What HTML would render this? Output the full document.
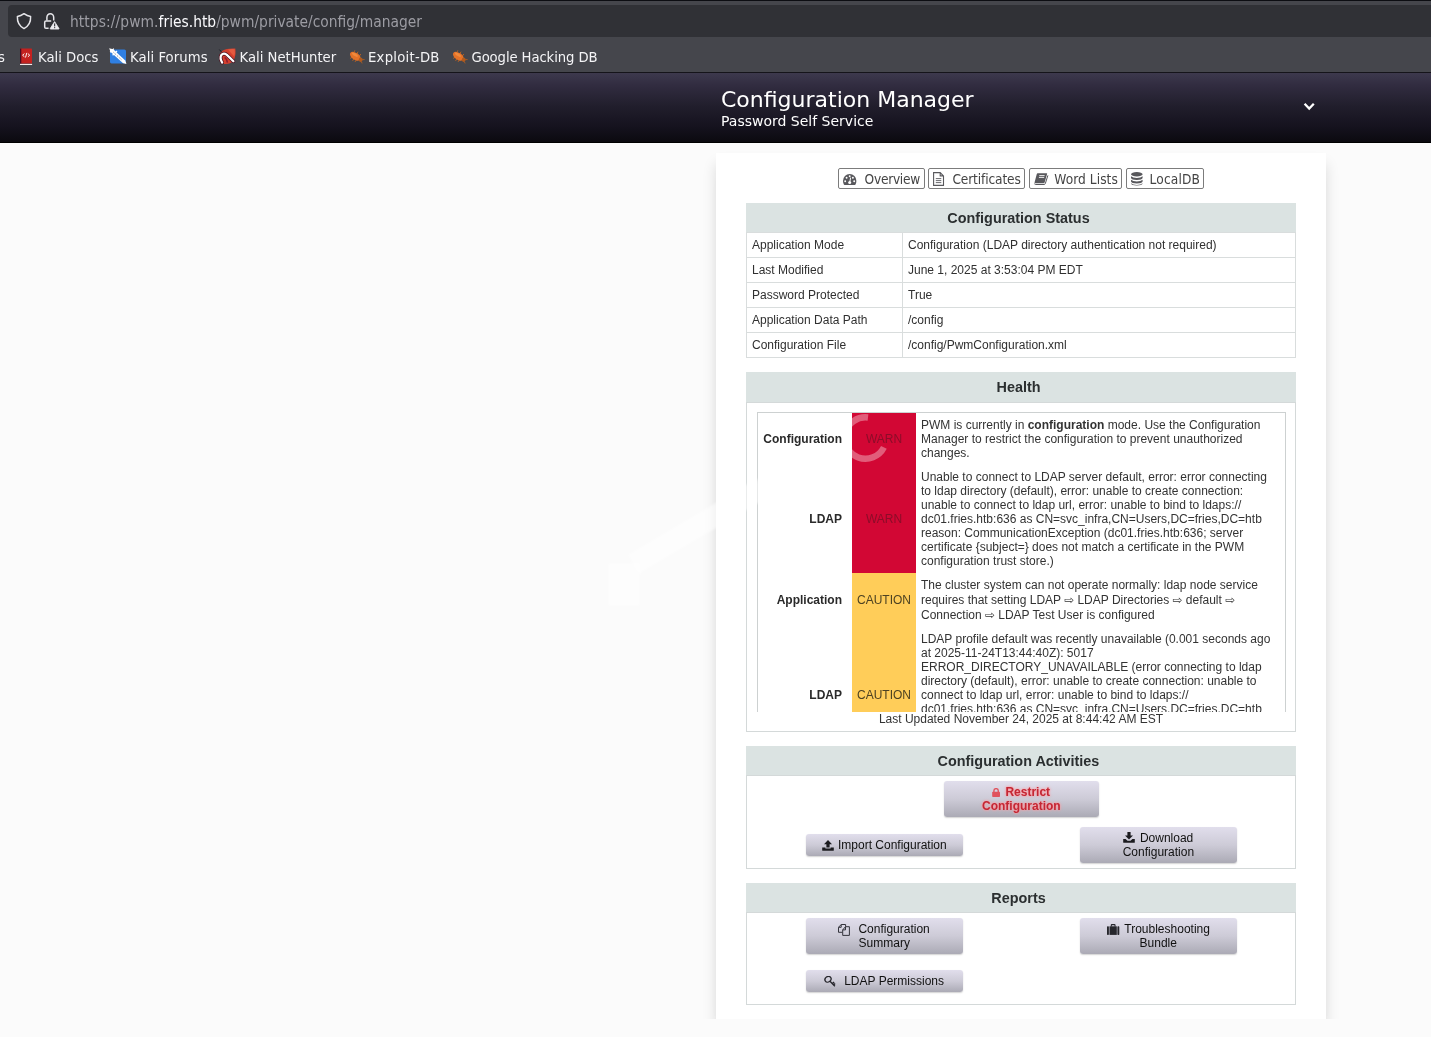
<!DOCTYPE html>
<html lang="en">
<head>
<meta charset="utf-8">
<title>Configuration Manager</title>
<style>
*{box-sizing:border-box;margin:0;padding:0}
html,body{width:1431px;height:1037px;overflow:hidden;background:#fbfbfb;font-family:"Liberation Sans",sans-serif;font-size:12px;color:#222}
.abs{position:absolute}
#root{position:absolute;left:0;top:0;width:1431px;height:1037px;overflow:hidden;will-change:transform}
/* ---------- browser chrome ---------- */
#chrome{position:absolute;left:0;top:0;width:1431px;height:73px;background:#45464c;border-top:1px solid #0c0d12;border-bottom:1px solid #15141a}
#urlbar{position:absolute;left:8px;top:4px;width:1440px;height:32px;border-radius:4px;background:#303136}
#urltext{position:absolute;left:70px;top:11px;font-family:"DejaVu Sans Condensed","DejaVu Sans","Liberation Sans",sans-serif;font-size:15.4px;line-height:20px;color:#9c9ca3;white-space:nowrap}
#urltext b{font-weight:400;color:#fbfbfe}
.bm{position:absolute;top:46px;font-family:"DejaVu Sans Condensed","DejaVu Sans","Liberation Sans",sans-serif;font-size:14.7px;line-height:20px;color:#f4f4f6;white-space:nowrap}
/* ---------- page header ---------- */
#header{position:absolute;left:0;top:73px;width:1431px;height:70px;background:linear-gradient(#3d394d,#312c40 18%,#211e2c 48%,#15121e 78%,#0b0a0f);border-bottom:1px solid #000}
#title{position:absolute;left:721px;top:86px;font-family:"DejaVu Sans","Liberation Sans",sans-serif;font-size:22px;line-height:28px;color:#fff;white-space:nowrap}
#subtitle{position:absolute;left:721px;top:112px;font-family:"DejaVu Sans","Liberation Sans",sans-serif;font-size:14px;line-height:18px;color:#fff;white-space:nowrap}
/* ---------- card ---------- */
#card{position:absolute;left:716px;top:153px;width:610px;height:866px;background:#fff;box-shadow:0 11px 13px 0 rgba(0,0,0,.135),0 14px 30px 0 rgba(0,0,0,.02)}
#below{position:absolute;left:0;top:1019px;width:1431px;height:18px;background:#fbfbfb}
.nav{position:absolute;top:168px;height:21px;border:1px solid #7c7c7c;border-radius:2px;background:#fff;font-family:"DejaVu Sans Condensed","DejaVu Sans","Liberation Sans",sans-serif;font-size:13.6px;line-height:19px;color:#444;white-space:nowrap}
.nav span{position:absolute;top:1px}
.panel{position:absolute;left:746px;width:550px;border:1px solid #d4d9d9;background:#fff}
.ptitle{position:absolute;left:746px;width:550px;height:30px;padding-right:5px;background:#dbe3e2;text-align:center;font-weight:700;font-size:14.4px;line-height:30px;color:#2b2f30}
table.st{position:absolute;left:746px;top:232px;width:550px;border-collapse:collapse;table-layout:fixed}
table.st td{border:1px solid #d9dddd;height:25px;padding:0 0 0 5px;font-size:12px;color:#303030;vertical-align:middle}
.btn{position:absolute;border-radius:3px;background:linear-gradient(#e1deec,#cdcbd7 50%,#abaab5);box-shadow:0 1px 1.5px rgba(0,0,0,.18);text-align:center;font-size:12px;line-height:14px;color:#111}

#hwrap{position:absolute;left:757px;top:412px;width:529px;height:300px;overflow:hidden}
table.ht{width:529px;border-collapse:collapse;table-layout:fixed;border:1px solid #cdd1d1}
table.ht td{padding:5px;font-size:12px;line-height:14px;color:#333;vertical-align:middle}
table.ht td.k{font-weight:700;text-align:right;padding-right:9.5px;color:#2a2a2a}
table.ht td.s{text-align:center;padding:0 0 0 1px}
table.ht td.warn{background:#d20734;color:#8c0d29}
table.ht td.caut{background:#ffcd59;color:#4d4222}
table.ht td.d{white-space:nowrap;padding-left:5.5px}
table.ht td.ar{line-height:14.8px}
table.ht td.ar i{font-style:normal;font-family:"DejaVu Sans",sans-serif;font-size:11.8px;line-height:1}
#lastupd{left:746px;top:712px;width:550px;text-align:center;font-size:12px;line-height:14px;color:#333}
.btn{white-space:nowrap}
.btn span{position:absolute;line-height:14px}
.btn.red{color:#c32734;font-weight:700;text-shadow:0 0 3px #ff9aa0,0 0 2px #ff9aa0}
</style>
</head>
<body>
<div id="root">
<!-- browser chrome -->
<div id="chrome">
  <div id="urlbar"></div>
  <div id="urltext"><span style="letter-spacing:.08px">https://pwm.</span><b>fries.htb</b>/pwm/private/config/manager</div>

  <svg class="abs" style="left:14px;top:8px" width="50" height="24" viewBox="14 9 50 24">
    <path d="M24 13.7 C26.2 15.3 28.3 16.2 30.6 16.6 C30.9 21.8 28.8 26 24 28.6 C19.2 26 17.1 21.8 17.4 16.6 C19.7 16.2 21.8 15.3 24 13.7 Z" fill="none" stroke="#e6e6ea" stroke-width="1.5" stroke-linejoin="round"/>
    <path d="M46.9 20.6 V17.4 A3.4 3.7 0 0 1 53.7 17.4 V20.6" fill="none" stroke="#e6e6ea" stroke-width="1.5"/>
    <path d="M51.2 20.9 H46 Q44.7 20.9 44.7 22.2 V27 Q44.7 28.3 46 28.3 H48.6" fill="none" stroke="#e6e6ea" stroke-width="1.5"/>
    <path d="M54.6 21.6 L59 28.6 Q59.2 29.1 58.6 29.1 H50.6 Q50 29.1 50.2 28.6 Z" fill="#ececf0" stroke="#ececf0" stroke-width="0.8" stroke-linejoin="round"/>
    <rect x="54.1" y="23.4" width="1.1" height="3" fill="#303136"/><rect x="54.1" y="27.1" width="1.1" height="1.1" fill="#303136"/>
  </svg>
  <!-- favicons -->
  <svg class="abs" style="left:19px;top:46px" width="15" height="19" viewBox="19 47 15 19">
    <rect x="20" y="48.6" width="12" height="15" rx="0.6" fill="#c4211f"/><rect x="20" y="48.6" width="1.3" height="15" fill="#4a0d22"/>
    <rect x="20" y="63.9" width="12.1" height="1.1" fill="#f3e9e9"/>
    <path d="M24.4 53.6 L22.6 55.2 L24.4 56.8 M27.9 53.6 L29.7 55.2 L27.9 56.8 M26.8 52.9 L25.5 57.5" fill="none" stroke="#fff" stroke-width="0.95"/>
  </svg>
  <svg class="abs" style="left:108px;top:46px" width="20" height="19" viewBox="108 47 20 19">
    <rect x="110" y="49.6" width="16" height="13.8" rx="1.6" fill="#2f7fe2"/>
    <path d="M109.2 48.2 L113.2 49.2 L125.2 60.4 L126.6 64 L122.8 63 L110.4 51.8 Z" fill="#fff"/>
    <path d="M110.2 52.2 L113.8 48.6 M112.6 55.2 L117 51" stroke="#fff" stroke-width="1.3"/>
    <path d="M113.5 52.3 L122 60.2" stroke="#27323f" stroke-width="0.6" stroke-dasharray="1.2 1.2"/>
  </svg>
  <svg class="abs" style="left:217px;top:46px" width="21" height="19" viewBox="217 47 21 19">
    <path d="M222.5 50.8 Q227 48 235.3 48.6 Q236.4 54.5 233.8 60.2 Q230 64.8 224 63.9 Q219 62.2 219.2 56.5 Q219.6 52.6 222.5 50.8 Z" fill="#d4402e"/>
    <path d="M228 49.4 Q232 48.8 234.6 49.2 Q235.4 53 234.2 56.6 Z" fill="#e45a40"/>
    <path d="M219.4 49.6 L221.4 51.8" stroke="#1a1a22" stroke-width="1"/>
    <path d="M222.2 62.6 Q219.6 58 221.2 55.2 Q223.4 52.4 226.6 54.6 Q229.8 57.6 233.4 61.2" fill="none" stroke="#4a1220" stroke-width="3.7" stroke-linecap="round"/>
    <path d="M222.2 62.6 Q219.6 58 221.2 55.2 Q223.4 52.4 226.6 54.6 Q229.8 57.6 233.4 61.2" fill="none" stroke="#fff" stroke-width="2.2" stroke-linecap="round"/>
    <path d="M224.6 57.4 Q226.8 58.6 227.4 62.6" fill="none" stroke="#8e1c30" stroke-width="1.5"/>
  </svg>
  <svg class="abs" style="left:346px;top:47px" width="20" height="17" viewBox="346 48 20 17">
    <g transform="rotate(33 356 56.7)">
      <path d="M351.6 52 L352.6 61.4 M355 51.4 L355.4 62 M358.6 51.8 L358 61.6" stroke="#b8601f" stroke-width="0.9"/>
      <ellipse cx="355.2" cy="56.7" rx="6" ry="3.5" fill="#e57228"/>
      <ellipse cx="361.6" cy="56.7" rx="2" ry="2.1" fill="#b25a1c"/>
      <path d="M363 55.6 L364.8 54.4 M363 57.8 L364.8 59" stroke="#b8601f" stroke-width="0.7"/>
      <ellipse cx="354" cy="55.6" rx="3.4" ry="1.4" fill="#f18a3c"/>
    </g>
  </svg>
  <svg class="abs" style="left:449px;top:47px" width="20" height="17" viewBox="346 48 20 17">
    <g transform="rotate(33 356 56.7)">
      <path d="M351.6 52 L352.6 61.4 M355 51.4 L355.4 62 M358.6 51.8 L358 61.6" stroke="#b8601f" stroke-width="0.9"/>
      <ellipse cx="355.2" cy="56.7" rx="6" ry="3.5" fill="#e57228"/>
      <ellipse cx="361.6" cy="56.7" rx="2" ry="2.1" fill="#b25a1c"/>
      <path d="M363 55.6 L364.8 54.4 M363 57.8 L364.8 59" stroke="#b8601f" stroke-width="0.7"/>
      <ellipse cx="354" cy="55.6" rx="3.4" ry="1.4" fill="#f18a3c"/>
    </g>
  </svg>
  <div class="bm" style="left:-2px">s</div>
  <div class="bm" style="left:38px">Kali Docs</div>
  <div class="bm" style="left:130px;letter-spacing:.08px">Kali Forums</div>
  <div class="bm" style="left:239.5px">Kali NetHunter</div>
  <div class="bm" style="left:368px;letter-spacing:.25px">Exploit-DB</div>
  <div class="bm" style="left:471.5px;letter-spacing:-.1px">Google Hacking DB</div>
</div>
<!-- page header -->
<div id="header"></div>
<div id="title">Configuration Manager</div>
<div id="subtitle">Password Self Service</div>
<svg class="abs" style="left:1300px;top:99px" width="18" height="16" viewBox="0 0 18 16"><path d="M4.6 4.8 L9.2 9.6 L13.8 4.8" fill="none" stroke="#fff" stroke-width="2.3"/></svg>

<div id="card"></div>
<div id="below"></div>

<!-- nav buttons -->
<div class="nav" style="left:838px;width:87px"><svg class="abs" style="left:4px;top:4px" width="15" height="13" viewBox="0 0 15 13"><path d="M0.9 11.6 Q0 9.9 0 8 A6.7 6.9 0 0 1 13.4 8 Q13.4 9.9 12.5 11.6 Q12.3 11.9 11.9 11.9 H1.5 Q1.1 11.9 0.9 11.6 Z" fill="#58585c"/><circle cx="2.2" cy="8.2" r="0.95" fill="#fff"/><circle cx="3.6" cy="4.7" r="0.95" fill="#fff"/><circle cx="6.7" cy="3.3" r="0.95" fill="#fff"/><circle cx="9.9" cy="4.7" r="0.95" fill="#fff"/><circle cx="11.2" cy="8.2" r="0.95" fill="#fff"/><path d="M7.6 4.6 L6.9 8.6" stroke="#fff" stroke-width="1"/><circle cx="6.7" cy="9.6" r="1.5" fill="#fff"/></svg><span style="left:25.6px;letter-spacing:-.28px">Overview</span></div>
<div class="nav" style="left:928px;width:97px"><svg class="abs" style="left:4px;top:3px" width="13" height="15" viewBox="0 0 13 15"><path d="M0.6 0.6 H7.2 L10.5 3.9 V13.4 H0.6 Z M7.2 0.6 V3.9 H10.5" fill="none" stroke="#58585c" stroke-width="1.1"/><path d="M2.8 6.6 H8.3 M2.8 8.6 H8.3 M2.8 10.6 H8.3" stroke="#58585c" stroke-width="0.9"/></svg><span style="left:23.4px;letter-spacing:-.13px">Certificates</span></div>
<div class="nav" style="left:1029px;width:93px"><svg class="abs" style="left:4px;top:4px" width="15" height="13" viewBox="0 0 15 13"><path d="M3.6 0.3 H12.6 Q13.4 0.3 13.1 1.1 L10.6 9.4 Q10.3 10.2 9.5 10.2 H1.2 Q0.3 10.2 0.6 9.3 L2.8 1.1 Q3 0.3 3.6 0.3 Z" fill="#58585c"/><path d="M13.9 2.4 L11.3 10.6 Q11 11.5 10 11.5 H1.6 Q0.6 11.5 0.5 10.6" fill="none" stroke="#58585c" stroke-width="1"/><path d="M5.3 2.6 H10.6 M4.9 4.4 H10.2" stroke="#fff" stroke-width="0.9"/></svg><span style="left:24.3px;letter-spacing:.06px">Word Lists</span></div>
<div class="nav" style="left:1126px;width:78px"><svg class="abs" style="left:4px;top:3px" width="13" height="15" viewBox="0 0 13 15"><g fill="#58585c"><ellipse cx="5.8" cy="2.2" rx="5.8" ry="2.2"/><path d="M0 4.2 Q1.8 5.9 5.8 5.9 Q9.8 5.9 11.6 4.2 V6 Q11.2 7.9 5.8 8 Q0.4 7.9 0 6 Z"/><path d="M0 7.7 Q1.8 9.4 5.8 9.4 Q9.8 9.4 11.6 7.7 V9.5 Q11.2 11.4 5.8 11.5 Q0.4 11.4 0 9.5 Z"/><path d="M0 11.2 Q1.8 12.9 5.8 12.9 Q9.8 12.9 11.6 11.2 V11.6 Q11.2 13.5 5.8 13.6 Q0.4 13.5 0 11.6 Z"/></g></svg><span style="left:22.6px;letter-spacing:.14px">LocalDB</span></div>

<!-- Configuration Status -->
<div class="ptitle" style="top:203px">Configuration Status</div>
<table class="st">
<colgroup><col style="width:156px"><col></colgroup>
<tr><td>Application Mode</td><td>Configuration (LDAP directory authentication not required)</td></tr>
<tr><td>Last Modified</td><td>June 1, 2025 at 3:53:04 PM EDT</td></tr>
<tr><td>Password Protected</td><td>True</td></tr>
<tr><td>Application Data Path</td><td>/config</td></tr>
<tr><td>Configuration File</td><td>/config/PwmConfiguration.xml</td></tr>
</table>


<!-- Health -->
<div class="ptitle" style="top:372px">Health</div>
<div class="panel" style="top:402px;height:330px"></div>
<div id="hwrap">
<table class="ht">
<colgroup><col style="width:94px"><col style="width:64px"><col></colgroup>
<tr style="height:52px"><td class="k">Configuration</td><td class="s warn">WARN</td><td class="d">PWM is currently in <b>configuration</b> mode. Use the Configuration<br>Manager to restrict the configuration to prevent unauthorized<br>changes.</td></tr>
<tr style="height:108px"><td class="k">LDAP</td><td class="s warn">WARN</td><td class="d">Unable to connect to LDAP server default, error: error connecting<br>to ldap directory (default), error: unable to create connection:<br>unable to connect to ldap url, error: unable to bind to ldaps://<br>dc01.fries.htb:636 as CN=svc_infra,CN=Users,DC=fries,DC=htb<br>reason: CommunicationException (dc01.fries.htb:636; server<br>certificate {subject=} does not match a certificate in the PWM<br>configuration trust store.)</td></tr>
<tr style="height:54px"><td class="k">Application</td><td class="s caut">CAUTION</td><td class="d ar">The cluster system can not operate normally: ldap node service<br>requires that setting LDAP <i>&#8680;</i> LDAP Directories <i>&#8680;</i> default <i>&#8680;</i><br>Connection <i>&#8680;</i> LDAP Test User is configured</td></tr>
<tr style="height:136px"><td class="k">LDAP</td><td class="s caut">CAUTION</td><td class="d">LDAP profile default was recently unavailable (0.001 seconds ago<br>at 2025-11-24T13:44:40Z): 5017<br>ERROR_DIRECTORY_UNAVAILABLE (error connecting to ldap<br>directory (default), error: unable to create connection: unable to<br>connect to ldap url, error: unable to bind to ldaps://<br>dc01.fries.htb:636 as CN=svc_infra,CN=Users,DC=fries,DC=htb<br>reason: CommunicationException (dc01.fries.htb:636; server<br>certificate {subject=} does not match a certificate in the PWM<br>configuration trust store.))</td></tr>
</table>
</div>
<svg class="abs" style="left:852px;top:413px" width="64" height="60" viewBox="852 413 64 60"><path d="M868 417.5 A20.7 20.7 0 1 0 883.9 447.4" fill="none" stroke="#fff" stroke-opacity=".35" stroke-width="6.4"/></svg>
<!-- faint overlay mark -->
<div class="abs" style="left:623px;top:515px;width:150px;height:22px;background:#fff;opacity:.5;transform:rotate(-30.6deg);filter:blur(1.2px)"></div>
<div class="abs" style="left:608px;top:563px;width:32px;height:43px;background:#fff;opacity:.5;filter:blur(1.5px)"></div>
<div class="abs" id="lastupd">Last Updated November 24, 2025 at 8:44:42 AM EST</div>

<!-- Configuration Activities -->
<div class="ptitle" style="top:746px">Configuration Activities</div>
<div class="panel" style="top:775px;height:94px"></div>
<div class="btn red" style="left:944px;top:781px;width:155px;height:36px"><svg class="abs" style="left:47.8px;top:6.6px" width="8.2" height="9.1" viewBox="0 0 9 10"><path d="M2.1 4.6V3.1a2.4 2.4 0 0 1 4.8 0v1.5" fill="none" stroke="#e0525d" stroke-width="1.5"/><rect x="0.2" y="4.2" width="8.6" height="5.6" rx="0.8" fill="#e0525d"/></svg><span style="left:61.4px;top:3.8px">Restrict</span><span style="left:38.0px;top:17.8px">Configuration</span></div>
<div class="btn" style="left:806px;top:834px;width:157px;height:22px"><svg class="abs" style="left:15.8px;top:6px" width="12" height="11" viewBox="0 0 12 11"><path d="M6 0.1 L10 4.2 H7.6 V7.4 H4.4 V4.2 H2 Z" fill="#1c1c20"/><path d="M0.2 7.4 H3.4 V8.4 H8.6 V7.4 H11.8 V10.2 Q11.8 10.8 11.2 10.8 H0.8 Q0.2 10.8 0.2 10.2 Z" fill="#1c1c20"/></svg><span style="left:32px;top:3.8px">Import Configuration</span></div>
<div class="btn" style="left:1080px;top:827px;width:157px;height:36px"><svg class="abs" style="left:42.8px;top:5.4px" width="12" height="11" viewBox="0 0 12 11"><path d="M4.4 0.1 H7.6 V3.4 H10 L6 7.5 L2 3.4 H4.4 Z" fill="#1c1c20"/><path d="M0.2 6.9 H2.6 L4.5 8.8 H7.5 L9.4 6.9 H11.8 V10.2 Q11.8 10.8 11.2 10.8 H0.8 Q0.2 10.8 0.2 10.2 Z" fill="#1c1c20"/></svg><span style="left:59.9px;top:4px">Download</span><span style="left:42.7px;top:18px">Configuration</span></div>

<!-- Reports -->
<div class="ptitle" style="top:883px">Reports</div>
<div class="panel" style="top:912px;height:93px"></div>
<div class="btn" style="left:806px;top:918px;width:157px;height:36px"><svg class="abs" style="left:32px;top:6px" width="12" height="12" viewBox="0 0 12 12"><path d="M0.5 3.3 L3.2 0.5 H7.6 V2.6 M0.5 3.3 V8.3 H4.4 M0.5 3.3 H3.2 V0.5" fill="none" stroke="#34343c" stroke-width="1"/><path d="M4.7 5.9 L7.5 2.7 H11.4 V11.4 H4.7 Z M4.7 5.9 H7.5 V2.7" fill="none" stroke="#34343c" stroke-width="1"/></svg><span style="left:52.4px;top:3.9px">Configuration</span><span style="left:52.6px;top:18px">Summary</span></div>
<div class="btn" style="left:1080px;top:918px;width:157px;height:36px"><svg class="abs" style="left:26.8px;top:6px" width="13" height="11" viewBox="0 0 13 11"><path d="M4.3 2.4 V1.1 Q4.3 0.6 4.8 0.6 H7.5 Q8 0.6 8 1.1 V2.4" fill="none" stroke="#26262c" stroke-width="1.1"/><rect x="0" y="2.3" width="1.9" height="8.6" rx="0.7" fill="#26262c"/><rect x="2.5" y="2.3" width="7.3" height="8.6" fill="#26262c"/><rect x="10.4" y="2.3" width="1.9" height="8.6" rx="0.7" fill="#26262c"/></svg><span style="left:44.3px;top:3.8px">Troubleshooting</span><span style="left:59.6px;top:18px">Bundle</span></div>
<div class="btn" style="left:806px;top:970px;width:157px;height:22px"><svg class="abs" style="left:17.6px;top:6.4px" width="12" height="11" viewBox="0 0 12 11"><ellipse cx="4" cy="3.3" rx="3.2" ry="2.7" transform="rotate(-35 4 3.3)" fill="none" stroke="#26262c" stroke-width="1.3"/><path d="M6 5.3 L10.9 10.2 M8.6 7.5 L10.1 6 M9.8 8.7 L11.1 7.4" fill="none" stroke="#26262c" stroke-width="1.35"/></svg><span style="left:38.2px;top:3.5px">LDAP Permissions</span></div>
</div>
</body>
</html>
